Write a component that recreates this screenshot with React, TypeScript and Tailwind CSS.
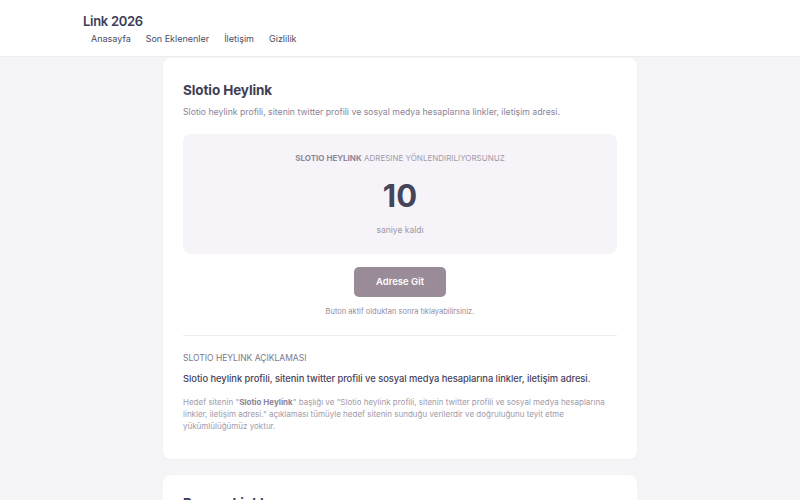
import React from "react";

export default function App() {
  return (
    <div className="min-h-[500px] bg-[#f5f5f8]" style={{ fontFamily: "Inter, 'Noto Sans', sans-serif" }}>
      <header className="h-[57px] bg-white border-b border-[#ececf1]">
        <div className="w-[634px] mx-auto pt-[12px]">
          <div className="text-[13px] leading-[18px] font-semibold text-[#3d3d56] tracking-[-0.3px]">Link 2026</div>
          <nav className="flex gap-[15px] pl-[8px] mt-[2px] text-[9px] leading-[14px] text-[#4b4b63]">
            <span>Anasayfa</span>
            <span>Son Eklenenler</span>
            <span>İletişim</span>
            <span>Gizlilik</span>
          </nav>
        </div>
      </header>
      <main className="w-[474px] mx-auto flex flex-col gap-[16px] pt-[1px]">
        <section className="bg-white rounded-[8px] px-[20px] pt-[22px] pb-[27px] shadow-[0_1px_2px_rgba(0,0,0,0.03)]">
          <h1 className="text-[13.5px] leading-[20px] font-bold text-[#3d3d56] tracking-[-0.1px]">Slotio Heylink</h1>
          <p className="mt-[6px] text-[8.7px] leading-[12px] text-[#8a8497]">
            Slotio heylink profili, sitenin twitter profili ve sosyal medya hesaplarına linkler, iletişim adresi.
          </p>
          <div className="mt-[16px] h-[120px] rounded-[8px] bg-[#f6f3f9] flex flex-col items-center pt-[19px]">
            <div className="text-[8px] leading-[10px] text-[#a19aaa] uppercase">
              <span className="font-bold text-[#8e8799]">Slotio Heylink</span> ADRESINE YÖNLENDIRILIYORSUNUZ
            </div>
            <div className="mt-[15px] text-[31px] leading-[36px] font-bold text-[#454559]">10</div>
            <div className="mt-[10px] text-[8.5px] leading-[12px] text-[#9d97a6]">saniye kaldı</div>
          </div>
          <div className="flex flex-col items-center mt-[13px]">
            <button className="w-[92px] h-[30px] rounded-[5px] bg-[#9a8b98] text-white text-[9.5px] font-semibold">
              Adrese Git
            </button>
            <div className="mt-[10px] text-[7.5px] leading-[10px] text-[#938d9d]">Buton aktif olduktan sonra tıklayabilirsiniz.</div>
          </div>
          <div className="mt-[18px] border-t border-[#ececf1]"></div>
          <div className="mt-[16px] text-[8.5px] leading-[12px] text-[#7d7889] uppercase">Slotio Heylink Açıklaması</div>
          <div className="mt-[8px] text-[9.4px] leading-[14px] font-medium text-[#47435c] tracking-[-0.05px]">
            Slotio heylink profili, sitenin twitter profili ve sosyal medya hesaplarına linkler, iletişim adresi.
          </div>
          <p className="mt-[10px] text-[8px] leading-[12px] text-[#a19aaa]">
            Hedef sitenin "<span className="font-bold text-[#8a8497]">Slotio Heylink</span>" başlığı ve "Slotio heylink profili, sitenin twitter profili ve sosyal medya hesaplarına linkler, iletişim adresi." açıklaması tümüyle hedef sitenin sunduğu verilerdir ve doğruluğunu teyit etme yükümlülüğümüz yoktur.
          </p>
        </section>
        <section className="bg-white rounded-[8px] px-[20px] pt-[18px] pb-[20px]">
          <h2 className="text-[13.5px] leading-[20px] font-bold text-[#3d3d56]">Benzer Linkler</h2>
        </section>
      </main>
    </div>
  );
}
